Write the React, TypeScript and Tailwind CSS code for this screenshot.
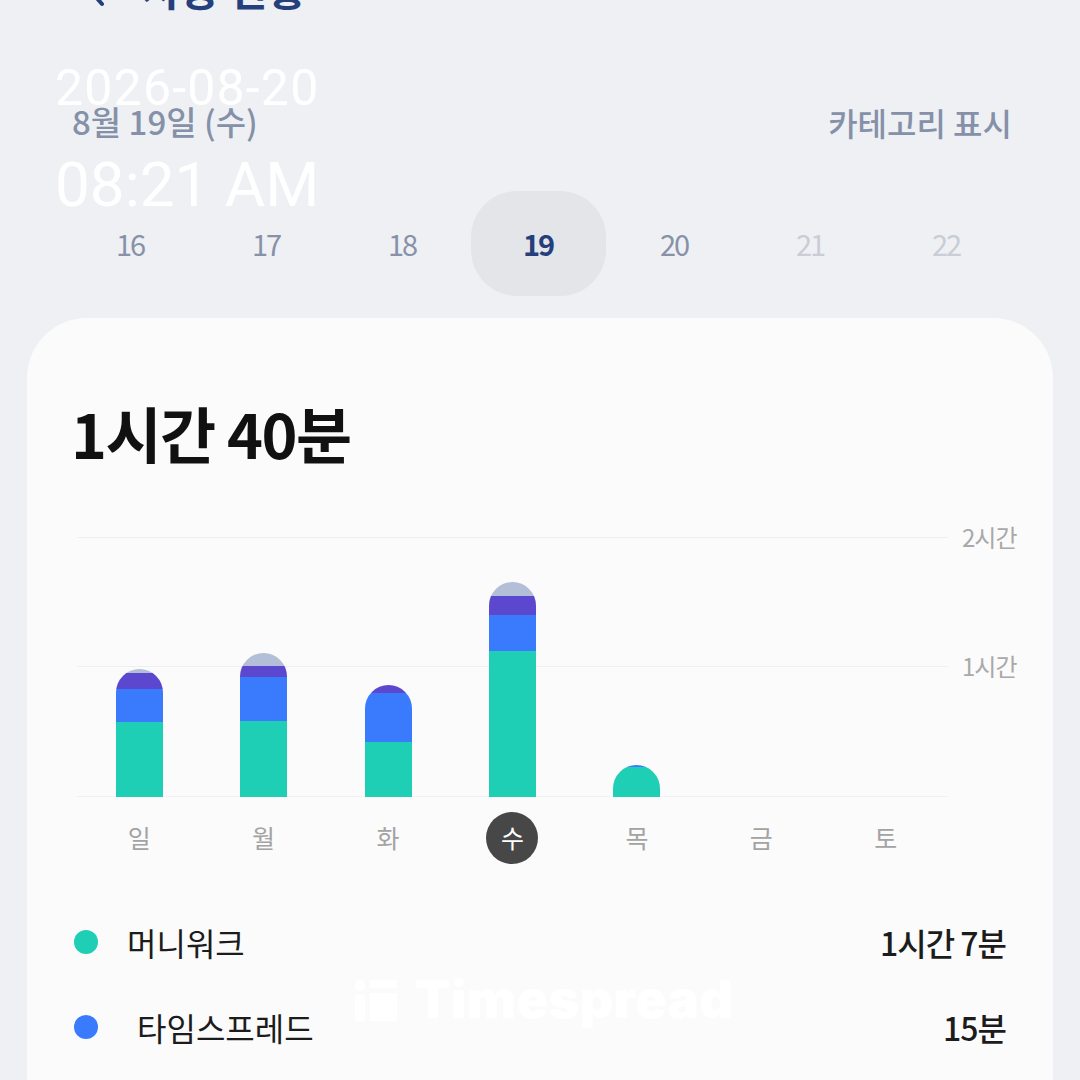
import React from 'react'

type Seg = { color: string; h: number }

const TEAL = '#1fcfb5'
const BLUE = '#3a7bfd'
const PURPLE = '#5b48cf'
const GRAY = '#b3bfd7'

const bars: Seg[][] = [
  [{ color: TEAL, h: 75 }, { color: BLUE, h: 33 }, { color: PURPLE, h: 16 }, { color: GRAY, h: 4 }],
  [{ color: TEAL, h: 76 }, { color: BLUE, h: 44 }, { color: PURPLE, h: 11 }, { color: GRAY, h: 13 }],
  [{ color: TEAL, h: 55 }, { color: BLUE, h: 49 }, { color: PURPLE, h: 8 }],
  [{ color: TEAL, h: 146 }, { color: BLUE, h: 36 }, { color: PURPLE, h: 19 }, { color: GRAY, h: 14 }],
  [{ color: TEAL, h: 30 }, { color: BLUE, h: 2 }],
  [],
  [],
]

const weekdays = ['일', '월', '화', '수', '목', '금', '토']

const dates = [
  { d: '16', cls: 'text-[#8792a8]' },
  { d: '17', cls: 'text-[#8792a8]' },
  { d: '18', cls: 'text-[#8792a8]' },
  { d: '19', cls: 'text-[#253f7d] font-semibold', active: true },
  { d: '20', cls: 'text-[#8792a8]' },
  { d: '21', cls: 'text-[#c9cdd5]' },
  { d: '22', cls: 'text-[#c9cdd5]' },
]

const legend = [
  { name: '머니워크', time: '1시간 7분', color: 'bg-[#1fcfb5]', indent: 'ml-[29px]' },
  { name: '타임스프레드', time: '15분', color: 'bg-[#3a7bfd]', indent: 'ml-[39px]' },
]

const App: React.FC = () => {
  return (
    <div className="relative w-[1080px] h-[1080px] overflow-hidden bg-[#eff0f4] flex flex-col font-['Noto_Sans_CJK_KR','Noto_Sans',sans-serif]">
      {/* header, mostly scrolled away */}
      <div className="flex items-center h-[50px] -mt-[37px] pl-[82px] gap-[34px] shrink-0">
        <svg width="26" height="40" viewBox="0 0 26 40" fill="none">
          <polyline points="20,4 6,20 20,36" stroke="#253f7d" strokeWidth="4" strokeLinecap="round" strokeLinejoin="round" />
        </svg>
        <span className="text-[42px] font-bold text-[#253f7d] leading-none">사용 현황</span>
      </div>

      {/* selected date + category toggle */}
      <div className="flex items-center justify-between h-[40px] mt-[89px] pl-[72px] pr-[68px] shrink-0">
        <span className="text-[33px] font-medium text-[#8591a8]">8월 19일 (수)</span>
        <span className="text-[32px] font-medium text-[#8591a8]">카테고리 표시</span>
      </div>

      {/* day strip */}
      <div className="grid grid-cols-[repeat(7,136px)] pl-[62px] mt-[49px] h-[105px] shrink-0">
        {dates.map((x) => (
          <div key={x.d} className="flex items-center justify-center">
            <div
              className={`flex items-center justify-center w-[135px] h-[105px] rounded-[46px] ${
                x.active ? 'bg-[#e4e5e9]' : ''
              }`}
            >
              <span className={`text-[29px] tracking-[-2px] ${x.cls}`}>{x.d}</span>
            </div>
          </div>
        ))}
      </div>

      {/* card */}
      <div className="mt-[22px] mx-[27px] flex-1 rounded-t-[60px] bg-[#fbfbfb] pt-[84px] flex flex-col">
        <div className="pl-[44px] text-[61px] font-semibold text-[#111] leading-none tracking-[-1.5px]">1시간 40분</div>

        <div className="relative ml-[50px] mt-[74px] w-[1000px]">
          <div className="h-[129px]">
            <div className="flex items-center h-0">
              <div className="w-[871px] border-t border-[#efefef]" />
              <span className="ml-[14px] text-[24px] text-[#a9a9a9] tracking-[-1px]">2시간</span>
            </div>
          </div>
          <div className="h-[130px]">
            <div className="flex items-center h-0">
              <div className="w-[871px] border-t border-[#efefef]" />
              <span className="ml-[14px] text-[24px] text-[#a9a9a9] tracking-[-1px]">1시간</span>
            </div>
          </div>
          <div className="w-[871px] border-t border-[#f1f1f1]" />

          <div className="absolute left-0 bottom-0 w-[871px] grid grid-cols-7 items-end">
            {bars.map((segs, i) => (
              <div key={i} className="flex justify-center">
                {segs.length > 0 && (
                  <div className="w-[47px] rounded-t-full overflow-hidden flex flex-col-reverse">
                    {segs.map((s, j) => (
                      <div key={j} style={{ height: s.h, backgroundColor: s.color }} />
                    ))}
                  </div>
                )}
              </div>
            ))}
          </div>
        </div>

        <div className="ml-[50px] mt-[15px] w-[871px] grid grid-cols-7">
          {weekdays.map((w, i) => (
            <div key={w} className="flex justify-center">
              <div
                className={`w-[52px] h-[52px] rounded-full flex items-center justify-center text-[25px] ${
                  i === 3 ? 'bg-[#474747] text-white' : 'text-[#a3a3a3]'
                }`}
              >
                {w}
              </div>
            </div>
          ))}
        </div>

        <div className="mt-[48px] px-[47px] flex flex-col gap-[25px]">
          {legend.map((l) => (
            <div key={l.name} className="flex items-center h-[60px]">
              <div className={`w-[24px] h-[24px] rounded-full ${l.color}`} />
              <span className={`text-[32px] text-[#1c1c1c] ${l.indent}`}>{l.name}</span>
              <span className="ml-auto text-[32px] font-medium text-[#1c1c1c] tracking-[-1px]">{l.time}</span>
            </div>
          ))}
        </div>
      </div>

      {/* capture watermarks */}
      <div className="absolute left-[55px] top-[63px] text-white font-['Roboto',sans-serif] leading-none pointer-events-none">
        <div className="text-[50px] tracking-[1.2px]">2026-08-20</div>
      </div>
      <div className="absolute left-[55px] top-[154px] text-white font-['Roboto',sans-serif] leading-none pointer-events-none">
        <div className="text-[62px]">08:21 AM</div>
      </div>
      <div className="absolute left-[355px] top-[974px] flex items-center gap-[18px] text-white pointer-events-none">
        <svg width="42" height="41" viewBox="0 0 42 41">
          <rect x="0" y="0" width="10" height="11" rx="4" fill="#fff" />
          <rect x="0" y="15" width="10" height="26" fill="#fff" />
          <rect x="15" y="0" width="27" height="8" fill="#fff" />
          <rect x="15" y="13" width="27" height="28" fill="#fff" />
        </svg>
        <span className="font-['Inter',sans-serif] font-black text-[52px] leading-none tracking-[0.5px]">Timespread</span>
      </div>
    </div>
  )
}

export default App
